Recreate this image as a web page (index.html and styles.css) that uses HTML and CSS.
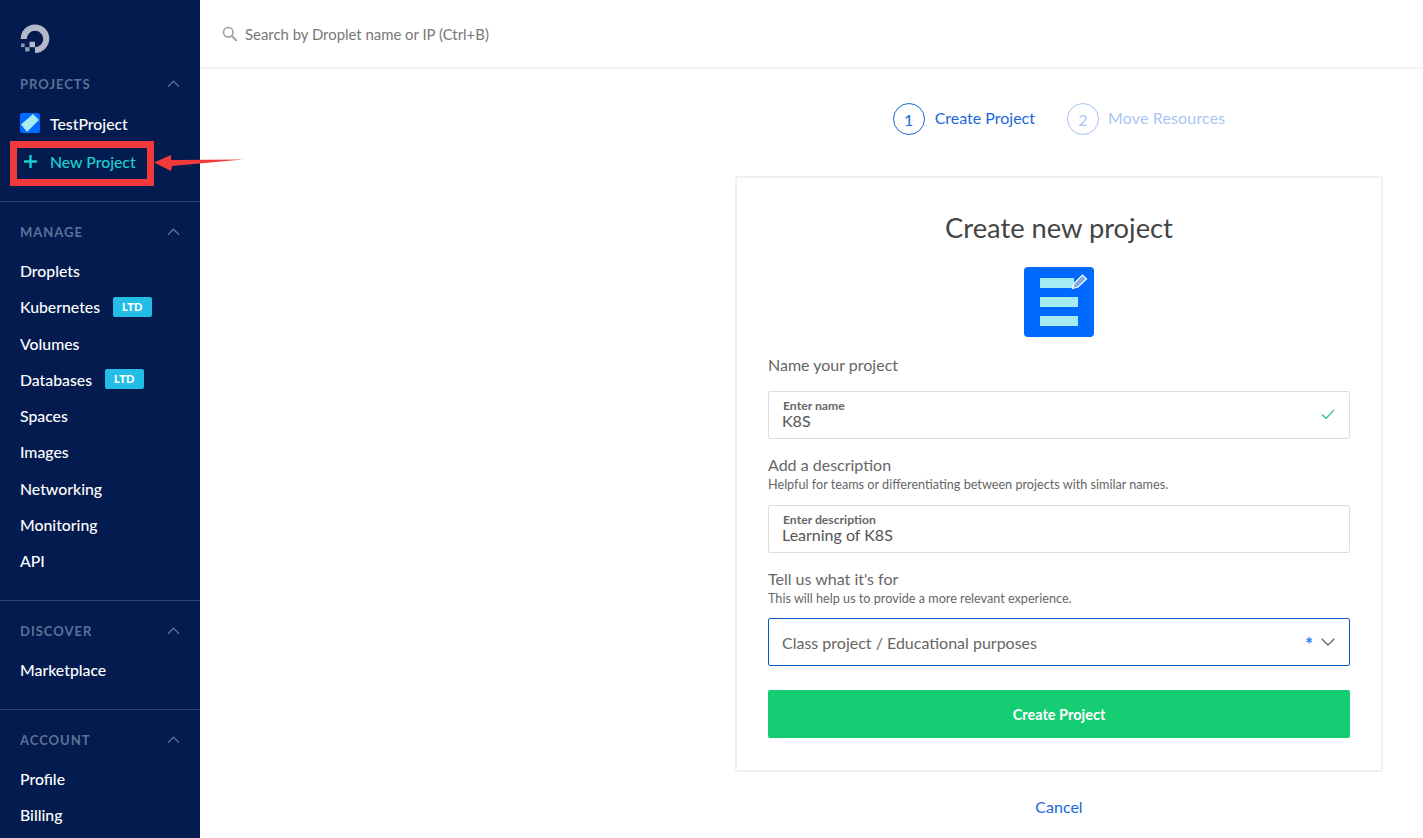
FILE: index.html
```html
<!DOCTYPE html>
<html lang="en">
<head>
<meta charset="utf-8">
<title>Create new project</title>
<link rel="stylesheet" href="styles.css">
</head>
<body>
<div class="app">
  <aside class="sidebar">
    <div class="logo">
      <svg width="30" height="30" viewBox="0 0 30 30">
        <path d="M15 29v-5.800a8.200 8.200 0 1 0-8.200-8.200H.7A14.300 14.300 0 1 1 15 29z" fill="#b3b9c9"/>
        <rect x="9.500" y="17.800" width="5.500" height="5.400" fill="#b3b9c9"/>
        <rect x="5.200" y="23.200" width="4.300" height="4.300" fill="#8f97ad"/>
        <rect x="1" y="19.500" width="3.600" height="3.600" fill="#8f97ad"/>
      </svg>
    </div>
    <section class="nav-section first">
      <div class="nav-head"><span>PROJECTS</span><svg class="chev" width="13" height="8" viewBox="0 0 14 8"><path d="M1 7l6-6 6 6" fill="none" stroke="#5d7199" stroke-width="1.400"/></svg></div>
      <div class="project-row">
        <svg class="project-icon" width="20" height="20" viewBox="0 0 20 20"><rect width="20" height="20" rx="2" fill="#0069ff"/><path d="M1 11.500L13 1l6 6L7 19z" fill="#a5ecf2"/></svg>
        <span>TestProject</span>
      </div>
      <div class="project-row new">
        <svg class="plus" width="13" height="13" viewBox="0 0 13 13"><path d="M6.500 0v13M0 6.500h13" stroke="#1ad1cf" stroke-width="2.300"/></svg>
        <span>New Project</span>
      </div>
    </section>
    <section class="nav-section manage">
      <div class="nav-head"><span>MANAGE</span><svg class="chev" width="13" height="8" viewBox="0 0 14 8"><path d="M1 7l6-6 6 6" fill="none" stroke="#5d7199" stroke-width="1.400"/></svg></div>
      <ul class="nav-list">
        <li>Droplets</li>
        <li><span>Kubernetes</span><b class="ltd">LTD</b></li>
        <li>Volumes</li>
        <li><span>Databases</span><b class="ltd">LTD</b></li>
        <li>Spaces</li>
        <li>Images</li>
        <li>Networking</li>
        <li>Monitoring</li>
        <li>API</li>
      </ul>
    </section>
    <section class="nav-section discover">
      <div class="nav-head"><span>DISCOVER</span><svg class="chev" width="13" height="8" viewBox="0 0 14 8"><path d="M1 7l6-6 6 6" fill="none" stroke="#5d7199" stroke-width="1.400"/></svg></div>
      <ul class="nav-list"><li>Marketplace</li></ul>
    </section>
    <section class="nav-section account">
      <div class="nav-head"><span>ACCOUNT</span><svg class="chev" width="13" height="8" viewBox="0 0 14 8"><path d="M1 7l6-6 6 6" fill="none" stroke="#5d7199" stroke-width="1.400"/></svg></div>
      <ul class="nav-list"><li>Profile</li><li>Billing</li></ul>
    </section>
  </aside>
  <main class="main">
    <header class="topbar">
      <svg width="16" height="16" viewBox="0 0 16 16"><circle cx="6.300" cy="6.300" r="4.800" fill="none" stroke="#999" stroke-width="1.500"/><path d="M9.800 9.800l5 5" stroke="#999" stroke-width="1.700"/></svg>
      <span>Search by Droplet name or IP (Ctrl+B)</span>
    </header>
    <div class="content">
      <div class="stepper">
        <div class="step active"><span class="num">1</span><span class="step-text">Create Project</span></div>
        <div class="step muted"><span class="num">2</span><span class="step-text">Move Resources</span></div>
      </div>
      <div class="card">
        <h1>Create new project</h1>
        <svg class="hero" width="70" height="70" viewBox="0 0 70 70">
          <rect width="70" height="70" rx="4" fill="#0069ff"/>
          <rect x="16" y="11" width="34" height="10" fill="#a5ecf2"/>
          <rect x="16" y="30" width="38" height="10" fill="#a5ecf2"/>
          <rect x="16" y="49" width="38" height="10" fill="#a5ecf2"/>
          <path d="M48.500 21.500l1.500-5L58.500 8l4 4-8.500 8z" fill="#7fa8ea" stroke="#fff" stroke-width="1.200"/>
        </svg>
        <p class="label name-label">Name your project</p>
        <div class="field">
          <small>Enter name</small>
          <span>K8S</span>
          <svg class="check" width="14" height="11" viewBox="0 0 14 11"><path d="M1 5.500l4 4 8-8.500" fill="none" stroke="#3cc47c" stroke-width="1.300"/></svg>
        </div>
        <p class="label">Add a description</p>
        <p class="hint">Helpful for teams or differentiating between projects with similar names.</p>
        <div class="field">
          <small>Enter description</small>
          <span>Learning of K8S</span>
        </div>
        <p class="label">Tell us what it's for</p>
        <p class="hint">This will help us to provide a more relevant experience.</p>
        <div class="select">
          <span>Class project / Educational purposes</span>
          <i class="req">*</i>
          <svg width="14" height="8" viewBox="0 0 14 8"><path d="M.7.7L7 7l6.300-6.300" fill="none" stroke="#666" stroke-width="1.300"/></svg>
        </div>
        <button class="submit" type="button">Create Project</button>
      </div>
      <a class="cancel">Cancel</a>
    </div>
  </main>
  <div class="callout"></div>
  <svg class="arrow" width="90" height="20" viewBox="0 0 90 20"><path d="M0 9.500L17 2v5l72-.500-71 6.500-1 5z" fill="#f23a3c"/></svg>
</div>
</body>
</html>
```
FILE: styles.css
```css
* { box-sizing: border-box; }
html, body { margin: 0; height: 100%; overflow: hidden; }
body { font-family: "Lato", "Liberation Sans", sans-serif; background: #fff; color: #444; }
.app { display: flex; width: 1423px; height: 838px; position: relative; overflow: hidden; }

.sidebar { flex: 0 0 200px; height: 838px; background: #031b4e; color: #fff; overflow: hidden; }
.logo { height: 68px; padding: 24px 0 0 20px; }
.logo svg { display: block; }
.nav-section { padding-top: 22px; border-bottom: 1px solid #2c4170; }
.nav-section.first { height: 134px; padding-top: 8px; }
.manage { height: 399px; }
.discover { height: 109px; }
.nav-section.account { border-bottom: 0; }
.nav-head { display: flex; align-items: center; justify-content: space-between; height: 16px; padding: 0 20px; font-size: 13px; font-weight: 700; letter-spacing: 1px; color: #5d7199; }
.nav-list { list-style: none; margin: 12.500px 0 0; padding: 0; }
.nav-list li { display: flex; align-items: center; gap: 13px; height: 36.250px; padding-left: 20px; font-size: 15.800px; font-weight: 500; }
.ltd { display: block; height: 20px; line-height: 20px; padding: 0 9px; border-radius: 2px; background: #24bde8; color: #fff; font-size: 11px; font-weight: 900; letter-spacing: .3px; }
.project-row { display: flex; align-items: center; gap: 10px; height: 38px; padding-left: 20px; font-size: 15.800px; font-weight: 500; }
.nav-head + .project-row { margin-top: 12px; }
.project-row.new { color: #1ad1cf; gap: 13px; padding-left: 24px; }

.main { flex: 1; min-width: 0; }
.topbar { display: flex; align-items: center; gap: 7px; height: 68px; padding-left: 22px; border-bottom: 1px solid #f1f1f1; box-shadow: 0 1px 3px rgba(0,0,0,.04); font-size: 14.900px; color: #777; }
.content { display: flex; flex-direction: column; align-items: center; width: 648px; margin-left: 535px; }
.stepper { display: flex; gap: 32px; height: 108px; padding-top: 35px; }
.step { display: flex; align-items: center; gap: 10px; height: 32px; font-size: 16px; white-space: nowrap; }
.step-text { margin-bottom: 3px; }
.num { display: flex; align-items: center; justify-content: center; width: 32px; height: 32px; border: 1px solid; border-radius: 50%; font-size: 16px; }
.active { color: #1a68d8; }
.muted { color: #a7c6f5; gap: 9px; }
.muted .step-text { letter-spacing: .15px; }

.card { width: 648px; height: 596px; padding: 32px 31px 0; border: 2px solid #f0f0f0; border-radius: 2px; display: flex; flex-direction: column; }
h1 { margin: 0; height: 36px; line-height: 36px; text-align: center; font-size: 27.300px; font-weight: 400; color: #444; }
.hero { display: block; margin: 21px auto 0; flex: none; }
.label { margin: 0; height: 20px; line-height: 20px; font-size: 16px; color: #666; }
.name-label { margin-top: 18px; }
.hint { margin: 2px 0 0; height: 17px; line-height: 16px; font-size: 12.650px; color: #666; }
.name-label + .field { margin-top: 16px; }
.field { position: relative; flex: none; height: 48px; margin: 11px 0 16px; padding: 8px 14px 0; border: 1px solid #dedede; border-radius: 2px; }
.field small { display: block; height: 12px; line-height: 12px; font-size: 12.200px; font-weight: 700; color: #666; }
.field span { display: block; height: 18px; line-height: 18px; margin-left: -1px; font-size: 16px; color: #555; }
.check { position: absolute; top: 17px; right: 14px; }
.select { display: flex; align-items: center; flex: none; height: 48px; margin-top: 10px; padding: 0 14px 0 13px; border: 1px solid #0a5cc2; border-radius: 2px; font-size: 16px; color: #666; }
.select span { flex: 1; }
.req { margin-right: 8px; font-style: normal; font-weight: 700; font-size: 19px; line-height: 18px; padding-top: 4px; color: #2a7dfa; }
.submit { flex: none; height: 48px; margin-top: 24px; border: 0; border-radius: 2px; background: #15cd72; color: #fff; font-family: inherit; font-size: 14.500px; font-weight: 700; }
.cancel { margin-top: 25px; font-size: 16px; color: #1a68d8; }

.callout { position: absolute; left: 10px; top: 141px; width: 144px; height: 45px; border: 7px solid #f23a3c; }
.arrow { position: absolute; left: 154px; top: 153px; }
```
